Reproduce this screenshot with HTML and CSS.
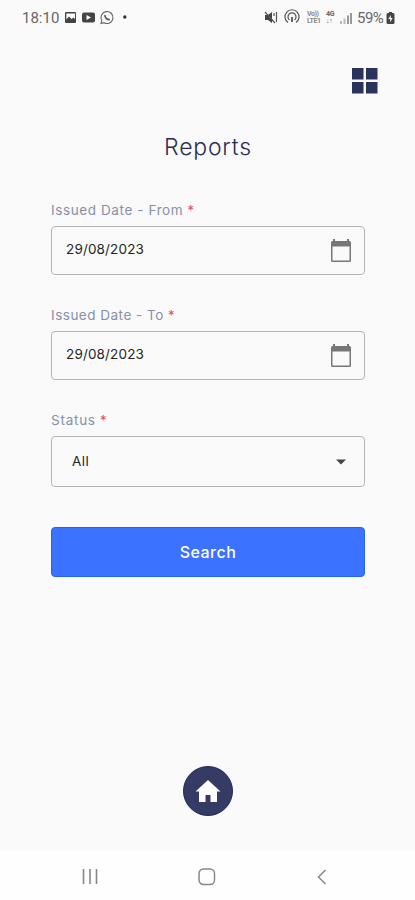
FILE: index.html
```html
<!DOCTYPE html>
<html lang="en">
<head>
<meta charset="utf-8">
<meta name="viewport" content="width=device-width, initial-scale=1">
<title>Reports</title>
<link rel="stylesheet" href="styles.css">
</head>
<body>
<div class="screen">
  <header class="status-bar">
    <time class="clock">18:10</time>
    <svg class="notices" width="66" height="16" viewBox="0 0 66 16">
      <path fill="#444" fill-rule="evenodd" d="M3 2h9a1 1 0 0 1 1 1v9a1 1 0 0 1-1 1H3a1 1 0 0 1-1-1V3a1 1 0 0 1 1-1zM3.300 3.500v6l2.700-3 2.500 2.500 2-1.500 1.500 1.500v-5.500z"/>
      <path fill="#444" fill-rule="evenodd" d="M21 2.500h9a2 2 0 0 1 2 2v6a2 2 0 0 1-2 2h-9a2 2 0 0 1-2-2v-6a2 2 0 0 1 2-2zM23.500 5v5l4.500-2.500z"/>
      <path fill="none" stroke="#666" stroke-width="1.100" d="M38 13.500l.8-3A6 6 0 1 1 41 12.700z"/>
      <path fill="none" stroke="#555" stroke-width="1.700" d="M42 5c-.4 2.300 2.200 5 4.800 4.600"/>
      <circle cx="61.800" cy="7" r="1.700" fill="#333"/>
    </svg>
    <svg class="sound" width="38" height="18" viewBox="0 0 38 18">
      <path fill="#444" d="M1 6h3l4-3v11l-4-3H1z"/>
      <path fill="none" stroke="#555" stroke-width="1.200" d="M1 3l10 11M10 4v3M12.500 3v10"/>
      <g fill="none" stroke="#555" stroke-width="1.200"><path d="M24 13.500a7 7 0 1 1 8 0M25.500 11a4 4 0 1 1 5 0"/><path d="M28 8v5" stroke-width="1.800"/></g>
    </svg>
    <span class="volte"><span>Vo))</span><span>LTE1</span></span>
    <span class="network"><span>4G</span><span>↓↑</span></span>
    <svg class="signal" width="14" height="14" viewBox="0 0 14 14"><path fill="#bbb" d="M0 10h2v3H0zM3.500 7.500h2V13h-2z"/><path fill="#999" d="M7 4.500h2V13H7zM10 2h2v11h-2z"/></svg>
    <span class="percent">59%</span>
    <svg class="battery" width="9" height="14" viewBox="0 0 9 14"><path fill="#444" fill-rule="evenodd" d="M3 1h3v1h1a1.500 1.500 0 0 1 1.500 1.500v8A1.500 1.500 0 0 1 7 13H2A1.500 1.500 0 0 1 .5 11.500v-8A1.500 1.500 0 0 1 2 2h1zM4.800 4L2.300 8h1.900v3.300L6.700 7H4.800z"/></svg>
  </header>

  <div class="toolbar">
    <svg width="26" height="26" viewBox="0 0 26 26" fill="#2c315e"><path d="M0 0h11.500v11.500H0zM14 0h11.500v11.500H14zM0 14h11.500v11.500H0zM14 14h11.500v11.500H14z"/></svg>
  </div>

  <main class="report">
    <h1><span>Reports</span></h1>
    <form>
      <div class="field">
        <label class="from">Issued Date - From <b>*</b></label>
        <div class="control"><span class="date">29/08/2023</span>
          <svg class="calendar" width="22" height="24" viewBox="0 0 22 24"><path fill="#777" fill-rule="evenodd" d="M3 0h2v2h12V0h2v2h.5A1.500 1.500 0 0 1 21 3.500v18a1.500 1.500 0 0 1-1.500 1.500h-17A1.500 1.500 0 0 1 1 21.500v-18A1.500 1.500 0 0 1 2.500 2H3zM2.500 7.500v14h17v-14z"/></svg>
        </div>
      </div>
      <div class="field">
        <label class="to">Issued Date - To <b>*</b></label>
        <div class="control"><span class="date">29/08/2023</span>
          <svg class="calendar" width="22" height="24" viewBox="0 0 22 24"><path fill="#777" fill-rule="evenodd" d="M3 0h2v2h12V0h2v2h.5A1.500 1.500 0 0 1 21 3.500v18a1.500 1.500 0 0 1-1.500 1.500h-17A1.500 1.500 0 0 1 1 21.500v-18A1.500 1.500 0 0 1 2.500 2H3zM2.500 7.500v14h17v-14z"/></svg>
        </div>
      </div>
      <div class="field">
        <label class="status">Status <b>*</b></label>
        <div class="control select"><span>All</span>
          <svg class="caret" width="10" height="6" viewBox="0 0 10 6"><path fill="#444" d="M0 .5h10L5 5.500z"/></svg>
        </div>
      </div>
      <button type="button"><span>Search</span></button>
    </form>
  </main>

  <div class="home">
    <svg width="26" height="24" viewBox="0 0 26 24"><path fill="#fff" d="M13 1l12.500 11.500h-3.500V23h-6.500v-7h-5v7H4V12.500H.5z"/></svg>
  </div>

  <nav class="system-nav">
    <svg width="16" height="18" viewBox="0 0 16 18"><path stroke="#888" stroke-width="1.600" d="M1.500 1v15M8 1v15M14.500 1v15"/></svg>
    <svg class="nav-home" width="18" height="18" viewBox="0 0 18 18"><rect x="1" y="1" width="15.500" height="15.500" rx="4.500" fill="none" stroke="#888" stroke-width="1.500"/></svg>
    <svg width="10" height="18" viewBox="0 0 10 18"><path fill="none" stroke="#888" stroke-width="1.500" d="M8.500 2L1.500 9l7 7"/></svg>
  </nav>
</div>
</body>
</html>
```
FILE: styles.css
```css
* { box-sizing: border-box; }
body { margin: 0; background: #fafafa; font-family: Inter, sans-serif; }
svg { display: block; flex: none; }
.screen { height: 900px; display: flex; flex-direction: column; overflow: hidden; }
.status-bar { height: 36px; padding: 0 20px 1px 22px; display: flex; align-items: center; font-family: Roboto, sans-serif; color: #666; }
.clock { width: 41px; font-size: 15px; }
.notices { margin-top: 1px; }
.sound { margin-left: 135px; }
.volte, .network { display: flex; flex-direction: column; font-size: 7px; line-height: 7px; font-weight: 700; color: #888; }
.volte { width: 16px; margin-left: 5px; letter-spacing: -0.4px; }
.network { width: 10px; margin-left: 3px; color: #666; letter-spacing: -0.3px; }
.signal { margin-left: 4px; }
.percent { width: 28px; margin-left: 3px; font-size: 15px; letter-spacing: -0.5px; }
.battery { margin-left: 1px; }
.toolbar { height: 58px; padding: 0 37px 0 0; display: flex; align-items: flex-end; justify-content: flex-end; }
.report { padding: 36px 50px 0 51px; }
h1 { margin: 0; height: 34px; line-height: 34px; text-align: center; font-size: 23px; font-weight: 300; letter-spacing: 0.8px; color: #292c55; }
form { padding-top: 36px; }
.field { height: 105px; }
label { display: block; height: 20px; line-height: 20px; font-size: 13.5px; color: #8691a8; white-space: nowrap; }
label b { color: #f04d72; font-weight: 500; }
.from { letter-spacing: 0.6px; }
.to { letter-spacing: 0.5px; }
.status { letter-spacing: 0.75px; }
.from b, .to b, .status b { letter-spacing: 0; margin-left: -0.5px; }
.control { height: 49px; margin-top: 6px; padding: 0 12px 0 14px; display: flex; align-items: center; justify-content: space-between; border: 1px solid #b5b5b5; border-radius: 4px; font-size: 13.5px; color: #252525; }
.date { margin-top: -3px; letter-spacing: 0.15px; }
.calendar { margin-top: 1px; }
.select { height: 51px; padding: 0 18px 0 20px; }
.select span { margin-top: -2px; letter-spacing: 0.4px; }
button { display: block; width: 314px; height: 50px; margin: 12px 0 0; padding: 0; border: 1px solid #2463f5; border-radius: 4px; background: #3b72ff; color: #fff; font: 500 16px/49px Inter, sans-serif; letter-spacing: 0.5px; }
.home { width: 50px; height: 50px; margin: 189px 0 0 183px; display: flex; align-items: center; justify-content: center; flex: none; border-radius: 50%; background: #363b66; border: 1px solid #24295b; }
.system-nav { height: 49px; margin-top: auto; padding: 3px 88px 0 82px; background: #fefefe; display: flex; align-items: center; justify-content: space-between; flex: none; }
.nav-home { margin-right: 2px; }
```
